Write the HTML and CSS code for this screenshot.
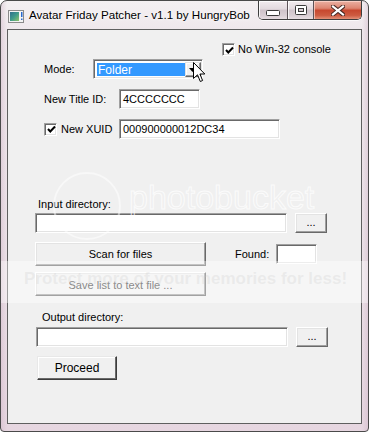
FILE: index.html
```html
<!DOCTYPE html>
<html>
<head>
<meta charset="utf-8">
<link rel="stylesheet" href="styles.css">
</head>
<body>
<div class="window">
  <div class="titlebar">
    <svg class="app-icon" width="16" height="13" viewBox="0 0 16 13">
      <defs>
        <linearGradient id="ig" x1="0" y1="0" x2="1" y2="1">
          <stop offset="0" stop-color="#2f6f8f"/>
          <stop offset="0.5" stop-color="#3f9a8a"/>
          <stop offset="1" stop-color="#8fc46a"/>
        </linearGradient>
      </defs>
      <rect x="0.5" y="0.5" width="15" height="12" fill="#f4f4f4" stroke="#8a8a8a"/>
      <rect x="2" y="2" width="9" height="9" fill="url(#ig)"/>
      <rect x="13" y="2" width="1.5" height="5" fill="#2a6ad0"/>
      <rect x="13" y="8.5" width="1.5" height="1.5" fill="#2a6ad0"/>
    </svg>
    <span class="title">Avatar Friday Patcher - v1.1 by HungryBob</span>
    <div class="caption">
      <div class="cbtn cmin">
        <svg width="14" height="6" viewBox="0 0 14 6"><rect x="0.5" y="0.5" width="13" height="5" rx="1" fill="#fff" stroke="#3a3a3a"/></svg>
      </div>
      <div class="cbtn cmax">
        <svg width="12" height="10" viewBox="0 0 12 10"><rect x="0.5" y="0.5" width="11" height="9" rx="1" fill="none" stroke="#3a3a3a"/><rect x="2" y="2" width="8" height="6" fill="none" stroke="#fff" stroke-width="2"/><rect x="3.5" y="3.5" width="5" height="3" fill="none" stroke="#3a3a3a"/></svg>
      </div>
      <div class="cbtn cclose">
        <svg width="14" height="11" viewBox="0 0 14 11"><path d="M2 1.5 L12 9.5 M12 1.5 L2 9.5" stroke="#4a2a24" stroke-width="4.2" stroke-linecap="square"/><path d="M2 1.5 L12 9.5 M12 1.5 L2 9.5" stroke="#fff" stroke-width="2.2" stroke-linecap="square"/></svg>
      </div>
    </div>
  </div>

  <div class="client">
    <div class="row row-console">
      <span class="check"><svg width="9" height="9" viewBox="0 0 9 9"><path d="M1 4 L3.3 6.5 L8 1.5" fill="none" stroke="#000" stroke-width="2"/></svg></span>
      <span class="label">No Win-32 console</span>
    </div>

    <div class="row row-mode">
      <span class="label lbl-mode">Mode:</span>
      <div class="combo">
        <span class="combo-sel">Folder</span>
        <span class="combo-btn"><svg width="7" height="4" viewBox="0 0 7 4"><path d="M0 0 H7 L3.5 4 Z" fill="#000"/></svg></span>
      </div>
    </div>

    <div class="row row-title">
      <span class="label lbl-title">New Title ID:</span>
      <div class="textbox tb-title">4CCCCCCC</div>
    </div>

    <div class="row row-xuid">
      <span class="check"><svg width="9" height="9" viewBox="0 0 9 9"><path d="M1 4 L3.3 6.5 L8 1.5" fill="none" stroke="#000" stroke-width="2"/></svg></span>
      <span class="label lbl-xuid">New XUID</span>
      <div class="textbox tb-xuid">000900000012DC34</div>
    </div>

    <div class="row row-inlabel"><span class="label">Input directory:</span></div>
    <div class="row row-indir">
      <div class="textbox tb-dir"></div>
      <div class="button btn-browse">...</div>
    </div>

    <div class="row row-scan">
      <div class="button btn-wide">Scan for files</div>
      <span class="label lbl-found">Found:</span>
      <div class="textbox tb-found"></div>
    </div>
    <div class="row row-save">
      <div class="button btn-wide disabled">Save list to text file ...</div>
    </div>

    <div class="row row-outlabel"><span class="label">Output directory:</span></div>
    <div class="row row-outdir">
      <div class="textbox tb-dir"></div>
      <div class="button btn-browse">...</div>
    </div>

    <div class="row row-proceed">
      <div class="button btn-proceed">Proceed</div>
    </div>
  </div>

  <div class="wm-ring"></div>
  <div class="wm-logo">photobucket</div>
  <div class="wm-band"><span>Protect more of your memories for less!</span></div>
  <svg class="cursor" width="13" height="21" viewBox="0 0 13 21">
    <path d="M0.5 0.5 L0.5 16.5 L4.5 12.8 L7.3 19.5 L9.6 18.5 L6.9 12 L11.8 12 Z" fill="#fff" stroke="#000" stroke-width="1" stroke-linejoin="miter"/>
  </svg>
</div>
</body>
</html>
```

FILE: styles.css
```css
* { box-sizing: border-box; }
html, body { margin: 0; padding: 0; background: #ffffff; }
body {
  width: 369px;
  height: 432px;
  overflow: hidden;
  font-family: "Liberation Sans", Arial, sans-serif;
  font-size: 11px;
  color: #000;
}

.window {
  position: relative;
  width: 369px;
  height: 432px;
  border: 1px solid #4a4a4a;
  border-radius: 7px 7px 4px 4px;
  padding: 0 6px;
  display: flex;
  flex-direction: column;
  overflow: hidden;
  background:
    linear-gradient(90deg, rgba(200,170,190,0.35) 0, rgba(255,255,255,0) 6px, rgba(255,255,255,0) 361px, rgba(200,170,190,0.35) 367px),
    linear-gradient(180deg, #f4f0f2 0, #efe8ec 28px, #ebe1e7 60%, #e6d6e0 100%);
}

.titlebar {
  height: 28px;
  display: flex;
  align-items: flex-start;
  flex: none;
}
.app-icon { margin: 9px 0 0 1px; flex: none; }
.title {
  margin: 6px 0 0 5px;
  font-family: "Liberation Sans", Arial, sans-serif;
  font-size: 11.6px;
  line-height: 16px;
  color: #000;
  text-shadow: 0 0 6px #fff, 0 0 3px #fff;
  white-space: nowrap;
}
.caption {
  margin-left: auto;
  height: 19px;
  display: flex;
  border: 1px solid #3d3d3d;
  border-top: none;
  border-radius: 0 0 5px 5px;
  overflow: hidden;
  flex: none;
  box-shadow: 0 1px 0 rgba(255,255,255,0.7);
}
.cbtn {
  display: flex;
  align-items: center;
  justify-content: center;
  height: 100%;
}
.cmin, .cmax {
  border-right: 1px solid #5c5358;
  background: linear-gradient(180deg, #f2ecef 0, #e2d9de 45%, #cfc3ca 50%, #d9ced4 80%, #e6dde2 100%);
  box-shadow: inset 1px 1px 0 rgba(255,255,255,0.8);
}
.cmin { width: 29px; padding-top: 5px; }
.cmax { width: 26px; padding-bottom: 1px; }
.cclose {
  width: 47px;
  background: linear-gradient(180deg, #eab1a3 0, #dd8672 40%, #c7482f 52%, #cd5b41 80%, #e39077 100%);
  box-shadow: inset 1px 1px 0 rgba(255,220,210,0.7);
}

.client {
  height: 395px;
  flex: none;
  border: 1px solid #5f5f5f;
  background: #f0f0f0;
  display: flex;
  flex-direction: column;
  padding-top: 13px;
}

.row { display: flex; align-items: center; flex: none; }
.label { line-height: 13px; white-space: nowrap; }

.check {
  width: 13px;
  height: 13px;
  flex: none;
  background: #fff;
  border: 1px solid;
  border-color: #a0a0a0 #ffffff #ffffff #a0a0a0;
  box-shadow: inset 1px 1px 0 #696969, inset -1px -1px 0 #e3e3e3;
  display: flex;
  align-items: center;
  justify-content: center;
  padding: 1px 0 0 1px;
}

.textbox {
  height: 20px;
  background: #fff;
  border: 1px solid;
  border-color: #a0a0a0 #ffffff #ffffff #a0a0a0;
  box-shadow: inset 1px 1px 0 #696969, inset -1px -1px 0 #e3e3e3;
  padding: 3px 0 0 3px;
  line-height: 13px;
  white-space: nowrap;
  flex: none;
}

.button {
  height: 24px;
  background: #f0f0f0;
  border: 1px solid;
  border-color: #ffffff #696969 #696969 #ffffff;
  box-shadow: inset -1px -1px 0 #a0a0a0, inset 1px 1px 0 #e3e3e3;
  display: flex;
  align-items: center;
  justify-content: center;
  line-height: 13px;
  flex: none;
}
.button.disabled { color: #404040; padding-top: 2px; }

/* row 1 */
.row-console { height: 13px; padding-left: 214px; gap: 3px; }

/* row 2 */
.row-mode { margin-top: 3px; padding-left: 36px; }
.lbl-mode { width: 49px; }
.combo {
  width: 110px;
  height: 20px;
  background: #fff;
  border: 1px solid;
  border-color: #a0a0a0 #ffffff #ffffff #a0a0a0;
  box-shadow: inset 1px 1px 0 #696969, inset -1px -1px 0 #e3e3e3;
  display: flex;
  padding: 2px 1px 1px 2px;
}
.combo-sel {
  flex: 1;
  margin: 1px 0 1px 1px;
  background: #3399ff;
  color: #fff;
  line-height: 14px;
  padding-left: 1px;
  font-size: 12px;
}
.combo-btn {
  width: 16px;
  background: #f0f0f0;
  border: 1px solid;
  border-color: #e3e3e3 #696969 #696969 #e3e3e3;
  box-shadow: inset -1px -1px 0 #a0a0a0, inset 1px 1px 0 #fff;
  display: flex;
  align-items: center;
  justify-content: center;
  padding-right: 1px;
}

/* row 3 */
.row-title { margin-top: 10px; padding-left: 36px; }
.lbl-title { width: 75px; }
.tb-title { width: 81px; }

/* row 4 */
.row-xuid { margin-top: 10px; padding-left: 36px; }
.lbl-xuid { width: 62px; padding-left: 4px; }
.tb-xuid { width: 161px; }

/* input directory */
.row-inlabel { margin-top: 59px; padding-left: 30px; }
.row-indir { margin-top: 2px; padding-left: 27px; gap: 8px; }
.tb-dir { width: 252px; }
.btn-browse { width: 32px; height: 20px; padding-bottom: 2px; }

.row-scan { margin-top: 9px; padding-left: 27px; height: 24px; }
.btn-wide { width: 171px; }
.lbl-found { margin-left: 29px; width: 41px; }
.tb-found { width: 41px; }
.row-save { margin-top: 6px; padding-left: 27px; }

/* output directory */
.row-outlabel { margin-top: 15px; padding-left: 34px; }
.row-outdir { margin-top: 3px; padding-left: 28px; gap: 8px; }

.row-proceed { margin-top: 9px; padding-left: 29px; }
.btn-proceed {
  width: 80px;
  border-color: #e8e8e8 #3c3c3c #3c3c3c #e8e8e8;
  box-shadow: inset -1px -1px 0 #696969, inset 1px 1px 0 #fff;
  font-size: 12px;
}

/* overlays */
.wm-band {
  position: absolute;
  left: -1px;
  right: -1px;
  top: 260px;
  height: 42px;
  background: rgba(255,255,255,0.38);
  display: flex;
  align-items: flex-start;
  justify-content: center;
  padding-top: 8px;
}
.wm-band span {
  font-family: "Liberation Sans", Arial, sans-serif;
  font-weight: bold;
  font-size: 17px;
  line-height: 20px;
  color: rgba(200,200,200,0.25);
  white-space: nowrap;
  padding-left: 2px;
}
.wm-logo {
  position: absolute;
  left: 128px;
  top: 176px;
  font-family: "Liberation Sans", Arial, sans-serif;
  font-size: 34px;
  line-height: 40px;
  color: transparent;
  -webkit-text-stroke: 1px rgba(255,255,255,0.75);
}
.wm-ring {
  position: absolute;
  left: 52px;
  top: 171px;
  width: 68px;
  height: 68px;
  border-radius: 50%;
  border: 2px solid rgba(255,255,255,0.5);
}
.cursor {
  position: absolute;
  left: 192px;
  top: 61px;
}
```
